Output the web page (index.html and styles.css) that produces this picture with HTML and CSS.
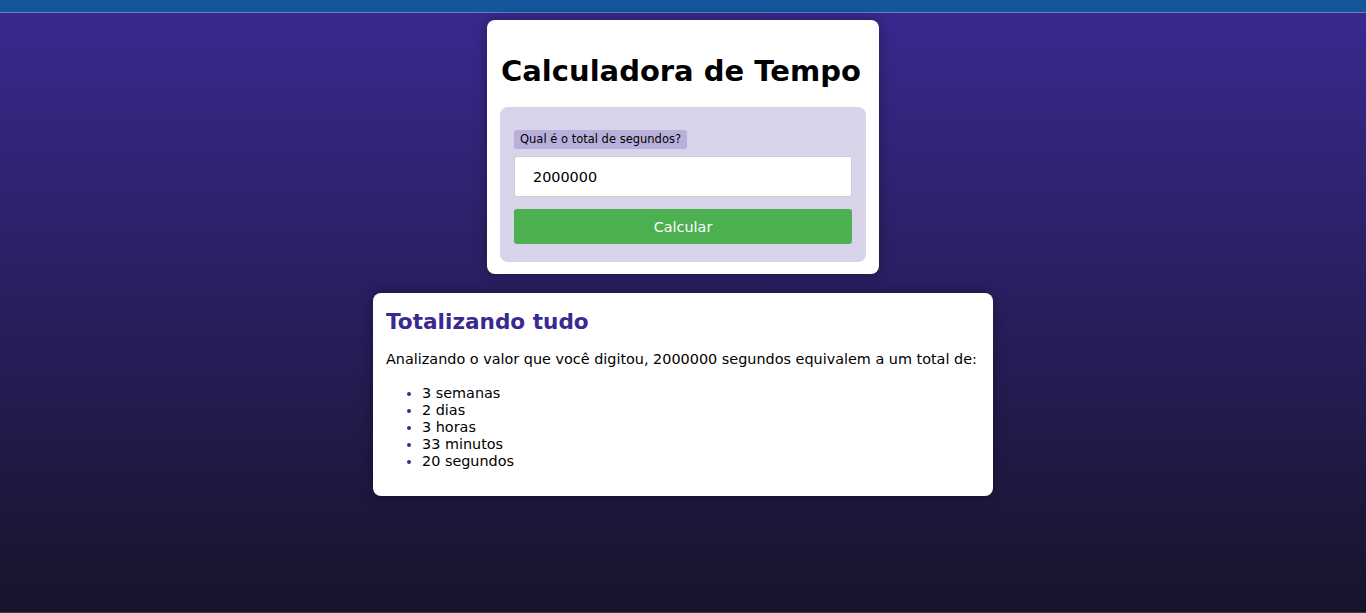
FILE: index.html
```html
<!DOCTYPE html>
<html lang="pt-BR">
<head>
<meta charset="utf-8">
<title>Calculadora de Tempo</title>
<link rel="stylesheet" href="styles.css">
</head>
<body>
<div class="topbar"></div>
<main class="page">
  <section class="card calc">
    <h1 class="title">Calculadora de Tempo</h1>
    <div class="form">
      <label class="label" for="seg">Qual é o total de segundos?</label>
      <input class="input" id="seg" type="text" value="2000000">
      <button class="btn" type="button">Calcular</button>
    </div>
  </section>
  <section class="card result">
    <h2 class="result-title">Totalizando tudo</h2>
    <p class="result-text">Analizando o valor que você digitou, 2000000 segundos equivalem a um total de:</p>
    <ul class="result-list">
      <li>3 semanas</li>
      <li>2 dias</li>
      <li>3 horas</li>
      <li>33 minutos</li>
      <li>20 segundos</li>
    </ul>
  </section>
</main>
</body>
</html>
```
FILE: styles.css
```css
* { box-sizing: border-box; }
html, body { margin: 0; padding: 0; height: 100%; }
body {
  font-family: "DejaVu Sans", Verdana, sans-serif;
  background: linear-gradient(to bottom, #3a2990 0%, #16142b 100%);
  min-height: 613px;
  display: flex;
  flex-direction: column;
  overflow: hidden;
}
.topbar {
  height: 13px;
  background: #15569a;
  border-bottom: 1px solid #5a86c0;
  flex: none;
}
.page {
  display: flex;
  flex-direction: column;
  align-items: center;
  padding-top: 7px;
  gap: 19px;
  flex: 1;
  border-bottom: 1px solid #3c3c3c;
}
.card {
  background: #fff;
  border-radius: 8px;
  box-shadow: 0 0 14px rgba(0,0,0,0.35);
}
.calc {
  width: 392px;
  padding: 13px 13px 12px;
}
.title {
  margin: 20px 0 18px 1px;
  font-size: 29px;
  font-weight: bold;
  color: #000;
  line-height: 36px;
  text-align: left;
  white-space: nowrap;
}
.form {
  background: #d8d3e8;
  border-radius: 8px;
  padding: 23px 14px 18px;
  display: flex;
  flex-direction: column;
  align-items: flex-start;
}
.label {
  display: inline-block;
  background: #b8b0da;
  border-radius: 3px;
  font-size: 11.5px;
  line-height: 19px;
  padding: 0 6px;
  color: #000;
}
.input {
  margin-top: 7px;
  width: 100%;
  height: 41px;
  border: 1px solid #cfcfcf;
  border-radius: 3px;
  background: #fff;
  padding: 0 18px;
  font-family: inherit;
  font-size: 14.4px;
  color: #000;
}
.btn {
  margin-top: 12px;
  width: 100%;
  height: 35px;
  border: none;
  border-radius: 3px;
  background: #4caf50;
  color: #fff;
  font-family: inherit;
  font-size: 14.4px;
}
.result {
  width: 620px;
  padding: 15px 13px 26px;
}
.result-title {
  margin: 0;
  font-size: 21.6px;
  line-height: 28px;
  color: #3a2990;
}
.result-text {
  margin: 15px 0 0;
  font-size: 14.4px;
  line-height: 17px;
}
.result-list {
  margin: 17px 0 0;
  padding-left: 36px;
  font-size: 14.4px;
  line-height: 17px;
}
.result-list li::marker { color: #3a2990; }
```
